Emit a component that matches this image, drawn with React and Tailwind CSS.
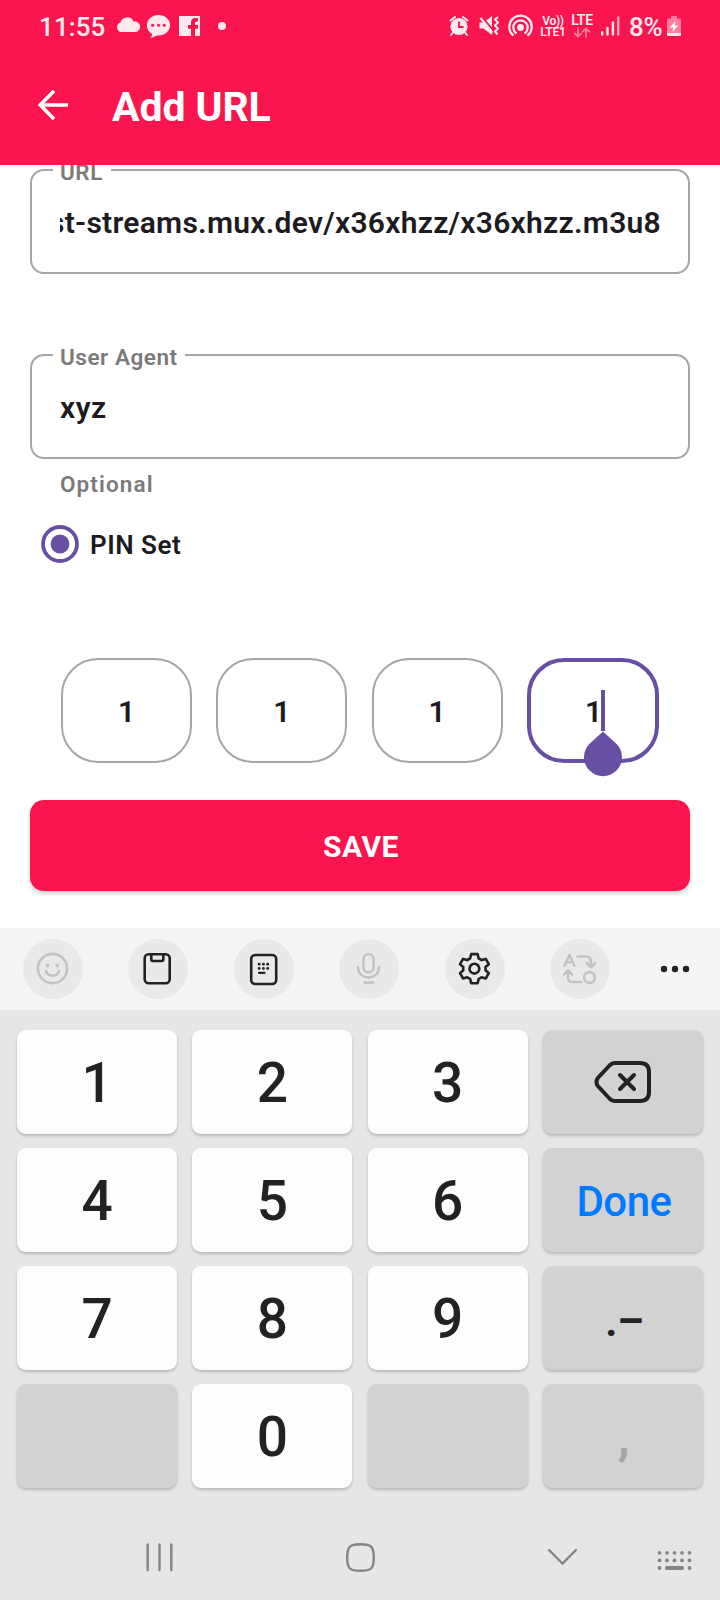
import React from "react";

function StatusBar() {
  return (
    <div className="flex h-[52px] items-center pl-[39px] pr-[38px] text-[#ffe9ef]">
      <span className="w-[67px] whitespace-nowrap pt-[2px] text-[26px] leading-[50px] font-medium tracking-[0.100px]">11:55</span>
      <svg className="ml-[9px] h-[52px] w-[112px] shrink-0" viewBox="115 0 112 52" fill="currentColor">
        <path d="M121 32 a5 5 0 0 1 -0.6 -9.6 A7 7 0 0 1 133.5 21.5 A5.3 5.3 0 0 1 136 32 Z" />
        <path d="M158.500 15 c6.500 0 11.600 4.600 11.600 10.300 c0 5.700 -5.100 10.300 -11.600 10.300 l-2 -0.100 c-1.400 1.200 -3.300 2 -5.600 2.300 c0.800 -1.200 1.200 -2.500 1.200 -3.700 c-3.100 -1.700 -5.200 -5 -5.200 -8.800 C146.900 19.600 152 15 158.500 15 Z" />
        <g fill="#fb154f">
          <circle cx="152.700" cy="25.200" r="1.500" />
          <circle cx="158.500" cy="25.200" r="1.500" />
          <circle cx="164.300" cy="25.200" r="1.500" />
        </g>
        <path d="M179 16 H200 V36 H195 V28.800 H198 V25 H195 V23 Q195 21.500 196.600 21.500 H198 V18 H195.500 Q191 18 191 22.500 V25 H188 V28.800 H191 V36 H179 Z" />
        <circle cx="222" cy="26" r="4" />
      </svg>
      <div className="flex-1" />
      <svg className="h-[52px] w-[86px] shrink-0" viewBox="448 0 86 52" fill="none" stroke="currentColor">
        <circle cx="459" cy="26.500" r="8.600" fill="currentColor" stroke="none" />
        <path d="M450.500 20.500 l4.500 -3.500 M467.500 20.500 l-4.500 -3.500 M453 32.500 l-2 2.500 M465 32.500 l2 2.500" strokeWidth="2" strokeLinecap="round" />
        <path d="M459 21.500 V27 H463.500" stroke="#fb154f" strokeWidth="2" />
        <path d="M479.500 22.500 h4 l8.500 -6.500 v19 l-8.500 -6.500 h-4 z" fill="currentColor" stroke="none" />
        <path d="M481.500 16.500 L493.500 31" stroke="#fb154f" strokeWidth="2" />
        <path d="M480.500 18 L492.500 32.500" strokeWidth="2" />
        <path d="M498 17 l-3 2.500 l3 3 l-3 3 l3 3 l-3 3 l2.500 3" strokeWidth="2" strokeLinejoin="round" />
        <circle cx="520.500" cy="27.500" r="3.400" fill="currentColor" stroke="none" />
        <path d="M516.500 33.500 A7.200 7.200 0 1 1 524.500 33.500 M513.500 35.500 A11.200 11.200 0 1 1 527.500 35.500" strokeWidth="2.300" />
      </svg>
      <div className="ml-[6px] flex w-[26px] flex-col items-center whitespace-nowrap pt-px text-[12px] font-semibold leading-[11px]">
        <span className="tracking-[-0.300px]">Vo))</span>
        <span className="tracking-[-0.200px]">LTE1</span>
      </div>
      <div className="ml-[5px] flex h-[24px] w-[22px] flex-col items-center">
        <span className="text-[14px] font-semibold leading-[13px] tracking-[-0.300px]">LTE</span>
        <svg className="h-[11px] w-[18px] opacity-50" viewBox="0 0 18 11" fill="none" stroke="currentColor" strokeWidth="1.700">
          <path d="M5 0.500 V9.500 M1.200 5.800 L5 9.600 L8.800 5.800 M13 10.500 V1.500 M9.200 5.200 L13 1.400 L16.800 5.200" />
        </svg>
      </div>
      <svg className="ml-[7px] h-[20px] w-[20px] shrink-0" viewBox="0 0 20 20" stroke="currentColor" strokeWidth="2.400" strokeLinecap="round">
        <path d="M2.200 16.200 V18.500 M7.500 12 V18.500" />
        <path d="M12.900 6.500 V18.500" />
        <path d="M18.200 1.500 V18.500" opacity=".7" />
      </svg>
      <span className="ml-[9px] w-[35px] whitespace-nowrap pt-[2px] text-[26px] leading-[50px] font-medium tracking-[-0.300px]">8%</span>
      <svg className="ml-[2px] h-[22px] w-[16px] shrink-0" viewBox="0 0 16 22">
        <path d="M5 1 h6 v2.500 h2.500 q1.500 0 1.500 1.500 v14.500 q0 1.500 -1.500 1.500 h-11 q-1.500 0 -1.500 -1.500 v-14.500 q0 -1.500 1.500 -1.500 h2.500 z" fill="#ffe9ef" opacity=".5" />
        <path d="M1 18 h14 v1.500 q0 1.500 -1.500 1.500 h-11 q-1.500 0 -1.500 -1.500 z" fill="#ffe9ef" />
        <path d="M9.500 6 L4 12.500 H7.500 L6.500 17 L12.200 10.500 H8.500 Z" fill="#fff" />
      </svg>
    </div>
  );
}

function Field({ label, labelWidth, children }) {
  return (
    <div className="relative h-[105px] rounded-[14px] border-2 border-[#a6a6a6] px-[28px]">
      <span className={`absolute -top-[13px] left-[21px] h-[28px] bg-white pl-[7px] whitespace-nowrap text-[22.500px] leading-[28px] font-semibold tracking-[0.550px] text-[#7a7a7a] ${labelWidth}`}>
        {label}
      </span>
      {children}
    </div>
  );
}

function PinBox({ active }) {
  if (active) {
    return (
      <div className="relative flex h-[105px] w-[132px] items-center justify-center rounded-[37px] border-4 border-[#6750a4] text-[30px] font-semibold text-[#1c1b1f]">
        <span className="-mr-px pt-px">1</span>
        <span className="absolute left-[70px] top-[28px] h-[41px] w-[4px] bg-[#6750a4]" />
        <svg className="absolute left-[53px] top-[69px] h-[46px] w-[38px]" viewBox="0 0 38 46" fill="#6750a4">
          <path d="M19 0.500 L32.400 12.700 A19 19 0 1 1 5.600 12.700 Z" />
        </svg>
      </div>
    );
  }
  return (
    <div className="flex h-[105px] w-[131px] items-center justify-center rounded-[37px] border-2 border-[#a6a6a6] text-[30px] font-semibold text-[#1c1b1f]">
      <span className="pt-px">1</span>
    </div>
  );
}

function ToolButton({ dim, children }) {
  return (
    <div className={`flex size-[60px] shrink-0 items-center justify-center rounded-full bg-[#e9e9e9] ${dim ? "text-[#c3c3c3]" : "text-[#222]"}`}>
      <svg className="size-[36px]" viewBox="0 0 36 36" fill="none" stroke="currentColor" strokeWidth="2.600" strokeLinecap="round" strokeLinejoin="round">
        {children}
      </svg>
    </div>
  );
}

function KeyboardToolbar() {
  return (
    <div className="flex h-[82px] items-center gap-[45.400px] bg-[#f5f5f5] pl-[23px]">
      <ToolButton dim>
        <circle cx="17.500" cy="17.500" r="14.600" />
        <circle cx="12.500" cy="14.500" r="1.900" fill="currentColor" stroke="none" />
        <circle cx="22.300" cy="14.500" r="1.900" fill="currentColor" stroke="none" />
        <path d="M11 20 C12.500 26.200 22.500 26.200 24 20" />
      </ToolButton>
      <ToolButton>
        <rect x="4.700" y="3.200" width="25" height="29" rx="4" />
        <path d="M11.300 3.500 V8.500 Q11.300 10 12.800 10 H21.800 Q23.300 10 23.300 8.500 V3.500" />
      </ToolButton>
      <ToolButton>
        <rect x="5.200" y="4" width="25" height="29" rx="4" />
        <g fill="currentColor" stroke="none">
          <circle cx="13.200" cy="13.200" r="1.400" />
          <circle cx="17.400" cy="13.200" r="1.400" />
          <circle cx="21.700" cy="13.200" r="1.400" />
          <circle cx="13.200" cy="17.400" r="1.400" />
          <circle cx="17.400" cy="17.400" r="1.400" />
          <circle cx="21.700" cy="17.400" r="1.400" />
          <rect x="12" y="20.700" width="7.500" height="2.300" rx="1" />
        </g>
      </ToolButton>
      <ToolButton dim>
        <rect x="12.400" y="3.300" width="10.200" height="18" rx="5" />
        <path d="M7 16 C7 30 28 30 28 16 M13.500 31.500 H22" />
      </ToolButton>
      <ToolButton>
        <g transform="translate(17.400 17.700)">
          <path d="M-3.200 -14.600 H3.200 L4.300 -10.200 Q6 -9.500 7.200 -8.600 L11.300 -9.800 L14.400 -4.500 L11.100 -1.600 Q11.400 0 11.100 1.600 L14.400 4.500 L11.300 9.800 L7.200 8.600 Q6 9.500 4.300 10.200 L3.200 14.600 H-3.200 L-4.300 10.200 Q-6 9.500 -7.200 8.600 L-11.300 9.800 L-14.400 4.500 L-11.100 1.600 Q-11.400 0 -11.100 -1.600 L-14.400 -4.500 L-11.300 -9.800 L-7.200 -8.600 Q-6 -9.500 -4.300 -10.200 Z" />
          <circle r="4.900" />
        </g>
      </ToolButton>
      <ToolButton dim>
        <path d="M2.500 14.800 L7.500 4 L12.500 14.800 M4.300 11.300 H10.700" />
        <path d="M15.500 5.500 H24 Q29 5.500 29 10.500 V15.500 M24.800 12 L29 16.300 L33.200 12" />
        <circle cx="27.500" cy="26.500" r="5.400" />
        <path d="M19.500 31 H10.500 Q6 31 6 26.500 V20 M2.200 23.500 L6 19.300 L10 23.500" />
      </ToolButton>
      <svg className="-ml-[10.500px] h-[10px] w-[60px] shrink-0" viewBox="646 0 60 10" fill="#222">
        <circle cx="665" cy="5" r="3.200" />
        <circle cx="676" cy="5" r="3.200" />
        <circle cx="687" cy="5" r="3.200" />
      </svg>
    </div>
  );
}

function Key({ gray, children }) {
  return (
    <div className={`flex h-[104px] items-center justify-center rounded-[9px] pt-[2px] text-[55px] font-medium text-[#222] shadow-[0_2px_3px_rgba(0,0,0,0.2)] ${gray ? "bg-[#d2d2d2]" : "bg-[#fdfdfd]"}`}>
      {children}
    </div>
  );
}

function Keypad() {
  return (
    <div className="grid grid-cols-4 gap-x-[15.300px] gap-y-[14px] px-[17px] pt-[20px]">
      <Key>1</Key>
      <Key>2</Key>
      <Key>3</Key>
      <Key gray>
        <svg className="-mt-[2px] ml-px h-[44px] w-[58px]" viewBox="0 0 58 44" fill="none" stroke="#222" strokeWidth="4" strokeLinecap="round" strokeLinejoin="round">
          <path d="M20.500 3 H46 Q55 3 55 12 V32 Q55 41 46 41 H20.500 Q18 41 15.500 38.500 L3.800 26 Q1.200 22 3.800 18 L15.500 5.500 Q18 3 20.500 3 Z" />
          <path d="M26 15 L40 29 M40 15 L26 29" />
        </svg>
      </Key>
      <Key>4</Key>
      <Key>5</Key>
      <Key>6</Key>
      <Key gray>
        <span className="pl-[2px] text-[42px] tracking-[-0.500px] text-[#007bff]">Done</span>
      </Key>
      <Key>7</Key>
      <Key>8</Key>
      <Key>9</Key>
      <Key gray>
        <span className="pl-[3px] pt-[4px] text-[42px] font-bold">.–</span>
      </Key>
      <Key gray />
      <Key>0</Key>
      <Key gray />
      <Key gray>
        <span className="pl-[2px] text-[50px] font-bold text-[#a6a6a6]">,</span>
      </Key>
    </div>
  );
}

function NavBar() {
  return (
    <svg className="mt-[32px] h-[80px] w-[720px]" viewBox="0 1520 720 80" fill="none" stroke="#858585" strokeWidth="2.400" strokeLinecap="round">
      <path d="M147.700 1544.500 V1570 M159.500 1544.500 V1570 M171.300 1544.500 V1570" />
      <path d="M360.500 1544.200 C371.500 1544.200 373.800 1546.700 373.800 1557.500 C373.800 1568.500 371.500 1570.800 360.500 1570.800 C349.500 1570.800 347.200 1568.500 347.200 1557.500 C347.200 1546.700 349.500 1544.200 360.500 1544.200 Z" />
      <path d="M549 1550 L562.500 1563.500 L576 1550" />
      <g fill="#858585" stroke="none">
        {[659.5, 667, 674.500, 682, 689.500].map((x) => (
          <React.Fragment key={x}>
            <circle cx={x} cy="1552.800" r="1.900" />
            <circle cx={x} cy="1560.400" r="1.900" />
          </React.Fragment>
        ))}
        <circle cx="659.500" cy="1568" r="1.900" />
        <circle cx="689.500" cy="1568" r="1.900" />
        <rect x="665" y="1566.100" width="19" height="3.800" rx="1.900" />
      </g>
    </svg>
  );
}

export default function App() {
  return (
    <div className="flex h-[1600px] w-[720px] flex-col overflow-hidden bg-[#fefefe] font-[Roboto,sans-serif]">
      <header className="h-[165px] shrink-0 bg-[#fb154f]">
        <StatusBar />
        <div className="flex h-[105px] items-center pl-[38px]">
          <svg className="h-[30px] w-[30px]" viewBox="0 0 30 30" fill="none" stroke="#fff" strokeWidth="3.600">
            <path d="M30 15 H2.500 M16 1 L2.300 15 L16 29" />
          </svg>
          <h1 className="ml-[44px] pt-[4px] text-[41px] leading-[48px] font-bold tracking-[-0.100px] text-white">Add URL</h1>
        </div>
      </header>

      <main className="h-[763px] shrink-0 overflow-hidden bg-white px-[30px] pt-[4px]">
        <Field label="URL" labelWidth="w-[58px]">
          <div className="-mr-px flex h-full justify-end overflow-hidden whitespace-nowrap pt-px text-[30px] leading-[101px] font-semibold tracking-[0.280px] text-[#1c1b1f]">
            st-streams.mux.dev/x36xhzz/x36xhzz.m3u8
          </div>
        </Field>
        <div className="mt-[80px]">
          <Field label="User Agent" labelWidth="w-[132px]">
            <div className="pt-px text-[30px] leading-[101px] font-semibold tracking-[0.500px] text-[#1c1b1f]">xyz</div>
          </Field>
        </div>
        <p className="mt-[10px] pl-[30px] pt-px text-[22.500px] leading-[29px] font-semibold tracking-[1.100px] text-[#7a7a7a]">Optional</p>
        <div className="mt-[25px] flex h-[40px] items-center pl-[11px]">
          <svg className="size-[38px]" viewBox="0 0 38 38">
            <circle cx="19" cy="19" r="17" fill="none" stroke="#6750a4" strokeWidth="3.800" />
            <circle cx="19" cy="19" r="9.400" fill="#6750a4" />
          </svg>
          <span className="ml-[11px] pt-[2px] text-[26px] leading-[36px] font-semibold tracking-[0.500px] text-[#1c1b1f]">PIN Set</span>
        </div>
        <div className="mt-[94px] flex justify-between pl-[31px] pr-[31px]">
          <PinBox />
          <PinBox />
          <PinBox />
          <PinBox active />
        </div>
        <button className="mt-[37px] flex h-[91px] w-full items-center justify-center rounded-[14px] bg-[#fb154f] pl-[2px] pt-px text-[30px] font-bold tracking-[0.500px] text-white shadow-[0_2px_4px_rgba(0,0,0,0.25)]">
          SAVE
        </button>
      </main>

      <section className="h-[672px] shrink-0 bg-[#e6e6e6]">
        <KeyboardToolbar />
        <Keypad />
        <NavBar />
      </section>
    </div>
  );
}
